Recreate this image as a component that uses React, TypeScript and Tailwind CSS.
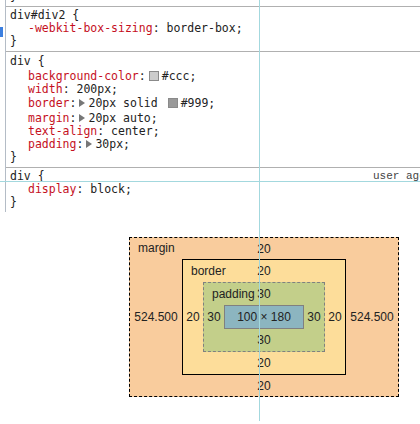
const Swatch = ({ cls }: { cls: string }) => (
  <span className={`inline-block w-[10px] h-[10px] border border-[#8a8a8a] mx-[3px] align-[-1px] ${cls}`} />
);

const Tri = () => (
  <svg width="6" height="8" viewBox="0 0 6 8" className="inline-block ml-[3px] mr-[3px] align-[0px]">
    <path d="M0 0L6 4L0 8Z" fill="#777" />
  </svg>
);

const P = ({ children }: { children: React.ReactNode }) => (
  <span className="text-[#c5101e]">{children}</span>
);

const App = () => {
  return (
    <div className="relative w-[420px] h-[424px] overflow-hidden bg-white text-[#222]">
      {/* styles pane */}
      <div className="ml-[5px] border-l border-[#b4bcc6] font-['DejaVu_Sans_Mono',monospace] text-[11.5px]">
        <div className="h-[6px] overflow-hidden flex items-end pl-[4px]">
          <div className="leading-[13px] mb-[3px]">{"}"}</div>
        </div>

        <div className="border-t border-[#b0b0b0] pl-[4px] pt-[2px] pb-[3px] leading-[13px]">
          <div>div#div2 {"{"}</div>
          <div className="pl-[18px] whitespace-nowrap">
            <P>-webkit-box-sizing</P>: border-box;
          </div>
          <div>{"}"}</div>
        </div>

        <div className="border-t border-[#b0b0b0] pl-[4px] pt-[2px] pb-[3px] whitespace-nowrap">
          <div className="leading-[15px]">div {"{"}</div>
          <div className="pl-[18px] leading-[14px]">
            <P>background-color</P>:<Swatch cls="bg-[#ccc]" />#ccc;
          </div>
          <div className="pl-[18px] leading-[13px]">
            <P>width</P>: 200px;
          </div>
          <div className="pl-[18px] leading-[15px]">
            <P>border</P>:<Tri />20px solid <Swatch cls="bg-[#999]" />#999;
          </div>
          <div className="pl-[18px] leading-[14px]">
            <P>margin</P>:<Tri />20px auto;
          </div>
          <div className="pl-[18px] leading-[13px]">
            <P>text-align</P>: center;
          </div>
          <div className="pl-[18px] leading-[13px]">
            <P>padding</P>:<Tri />30px;
          </div>
          <div className="leading-[13px]">{"}"}</div>
        </div>

        <div className="border-t border-[#b0b0b0] pl-[4px] pt-[2px] pb-[3px] leading-[13px] whitespace-nowrap">
          <div className="flex">
            <span className="w-[363px] shrink-0">div {"{"}</span>
            <span className="font-['Liberation_Mono',monospace] text-[11px] text-[#444]">user agent stylesheet</span>
          </div>
          <div className="pl-[18px]">
            <P>display</P>: block;
          </div>
          <div>{"}"}</div>
        </div>
      </div>

      {/* metrics diagram */}
      <div className="pt-[25px] pl-[129px] font-['Liberation_Sans',Arial,sans-serif] text-[12px] text-[#222]">
        <div className="relative w-[270px] border border-dashed border-black bg-[#f9cc9d] flex flex-col">
          <span className="absolute left-[8px] top-0 leading-[21px]">margin</span>
          <div className="h-[21px] flex items-center justify-center">20</div>
          <div className="flex items-center">
            <div className="w-[52px] text-center">524.500</div>
            <div className="relative w-[164px] border border-black bg-[#fddd9a] flex flex-col">
              <span className="absolute left-[8px] top-0 leading-[22px]">border</span>
              <div className="h-[22px] flex items-center justify-center">20</div>
              <div className="flex items-center">
                <div className="w-[20px] text-center">20</div>
                <div className="relative w-[122px] border border-dashed border-[#808080] bg-[#c3cf8a] flex flex-col">
                  <span className="absolute left-[8px] top-0 leading-[22px]">padding</span>
                  <div className="h-[22px] flex items-center justify-center">30</div>
                  <div className="flex items-center">
                    <div className="w-[20px] text-center">30</div>
                    <div className="w-[80px] h-[24px] border border-[#808080] bg-[#8cb5c0] flex items-center justify-center whitespace-nowrap">
                      100 × 180
                    </div>
                    <div className="w-[20px] text-center">30</div>
                  </div>
                  <div className="h-[22px] flex items-center justify-center">30</div>
                </div>
                <div className="w-[20px] text-center">20</div>
              </div>
              <div className="h-[22px] flex items-center justify-center">20</div>
            </div>
            <div className="w-[52px] text-center">524.500</div>
          </div>
          <div className="h-[21px] flex items-center justify-center">20</div>
        </div>
      </div>

      {/* overlays: selection marker and guide lines */}
      <div className="absolute left-0 top-[27px] w-[3px] h-[10px] bg-[#3b7fe0]" />
      <div className="absolute left-[259px] top-0 w-px h-[421px] bg-[#a3d8de] pointer-events-none" />
      <div className="absolute left-0 top-[181px] w-full h-px bg-[#a3d8de] pointer-events-none" />
    </div>
  );
};

export default App;
